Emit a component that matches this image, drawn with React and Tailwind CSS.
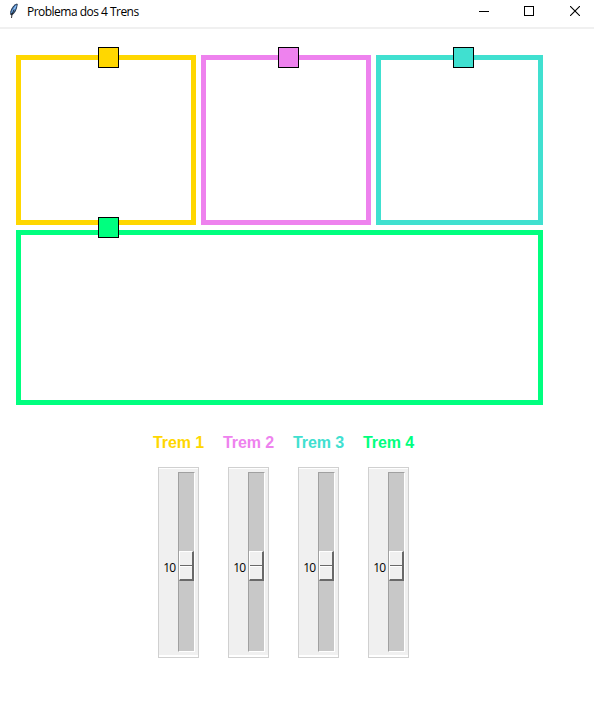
const trains = [
  { name: "Trem 1", color: "text-[#ffd700]", speed: 10 },
  { name: "Trem 2", color: "text-[#ee82ee]", speed: 10 },
  { name: "Trem 3", color: "text-[#40e0d0]", speed: 10 },
  { name: "Trem 4", color: "text-[#00ff7f]", speed: 10 },
];

function FeatherIcon() {
  return (
    <svg className="ml-[9px] mt-[3px] h-4 w-[10px] shrink-0" viewBox="0 0 10 16">
      <path d="M8 .5C5 1.500 2.300 4.500 1.300 8.500L1.200 11.500L2.500 12.500C6 10.500 8.200 6.500 8.700 1.500Z" fill="#26364c" />
      <path d="M7.700 1.300C5 3 2.500 6.500 2 10L3.800 10.200C6.300 7.500 7.900 4.500 7.700 1.300Z" fill="#5294dc" />
      <path d="M7 2.800L3.600 8.500" stroke="#b4d0f0" strokeWidth=".9" fill="none" />
      <path d="M5 6.500L3 11.500L2.500 15" stroke="#1c1c1c" strokeWidth=".9" fill="none" />
    </svg>
  );
}

function TitleBar() {
  return (
    <header className="flex h-[29px] items-start border-b-2 border-[#f0f0f0]">
      <FeatherIcon />
      <h1 className="ml-2 mt-1 flex-1 whitespace-nowrap font-['Open_Sans',sans-serif] text-[12px] leading-4 tracking-[-0.52px] text-black">
        Problema dos 4 Trens
      </h1>
      <div className="mr-[14px] mt-[6px] flex">
        <svg className="mr-[35px] h-[10px] w-[10px]" viewBox="0 0 10 10" shapeRendering="crispEdges">
          <path d="M0 5.500H10" stroke="#000" />
        </svg>
        <svg className="mr-[36px] h-[10px] w-[10px]" viewBox="0 0 10 10" shapeRendering="crispEdges">
          <path d="M.5.5H9.500V9.500H.5Z" stroke="#000" fill="none" />
        </svg>
        <svg className="h-[10px] w-[10px]" viewBox="0 0 10 10">
          <path d="M0 0L10 10M10 0L0 10" stroke="#000" strokeWidth="1.100" />
        </svg>
      </div>
    </header>
  );
}

function Track({ className, train }) {
  return (
    <div className={"relative border-[5px] " + className}>
      <div className={"absolute h-[21px] w-[21px] border border-black " + train} />
    </div>
  );
}

function Slider({ name, color, speed }) {
  return (
    <div className="flex w-[70px] flex-col items-center">
      <div className={"whitespace-nowrap pl-px font-['Liberation_Sans',Arial,sans-serif] text-[16px] font-bold leading-[18px] tracking-[-0.1px] " + color}>
        {name}
      </div>
      <div className="mt-[15px] h-[191px] w-[41px] border border-[#d0d0d0] bg-[#f0f0f0]">
        <div className="flex h-[189px] border-b-2 border-t border-white pt-[3px]">
          <div className="flex w-[19px] items-start justify-end pr-[2px] pt-[88px] font-['Open_Sans',sans-serif] text-[12px] leading-4 tracking-[-0.7px] text-black">
            {speed}
          </div>
          <div className="h-[180px] w-[17px] shrink-0 border-b border-l border-r border-t border-b-white border-l-[#a0a0a0] border-r-white border-t-[#a0a0a0] bg-[#c8c8c8] pt-[78px]">
            <div className="flex h-[30px] w-[15px] flex-col border-b-2 border-l border-r-2 border-t border-b-[#696969] border-l-white border-r-[#696969] border-t-white bg-[#f0f0f0] pt-[13px]">
              <div className="h-px bg-[#696969]" />
              <div className="h-px bg-white" />
            </div>
          </div>
        </div>
      </div>
    </div>
  );
}

export default function App() {
  return (
    <div className="h-[723px] w-[594px] overflow-hidden bg-white">
      <TitleBar />
      <main>
        <section className="ml-4 mt-[26px] flex w-[527px] flex-col gap-[5px]">
          <div className="flex gap-[5px]">
            <Track className="h-[170px] w-[180px] border-[#ffd700]" train="left-[77px] top-[-13px] bg-[#ffd700]" />
            <Track className="h-[170px] w-[170px] border-[#ee82ee]" train="left-[72px] top-[-13px] bg-[#ee82ee]" />
            <Track className="h-[170px] w-[167px] border-[#40e0d0]" train="left-[72px] top-[-13px] bg-[#40e0d0]" />
          </div>
          <Track className="h-[175px] border-[#00ff7f]" train="left-[77px] top-[-18px] bg-[#00ff7f]" />
        </section>
        <section className="ml-[143px] mt-[29px] flex">
          {trains.map((train) => (
            <Slider key={train.name} {...train} />
          ))}
        </section>
      </main>
    </div>
  );
}
